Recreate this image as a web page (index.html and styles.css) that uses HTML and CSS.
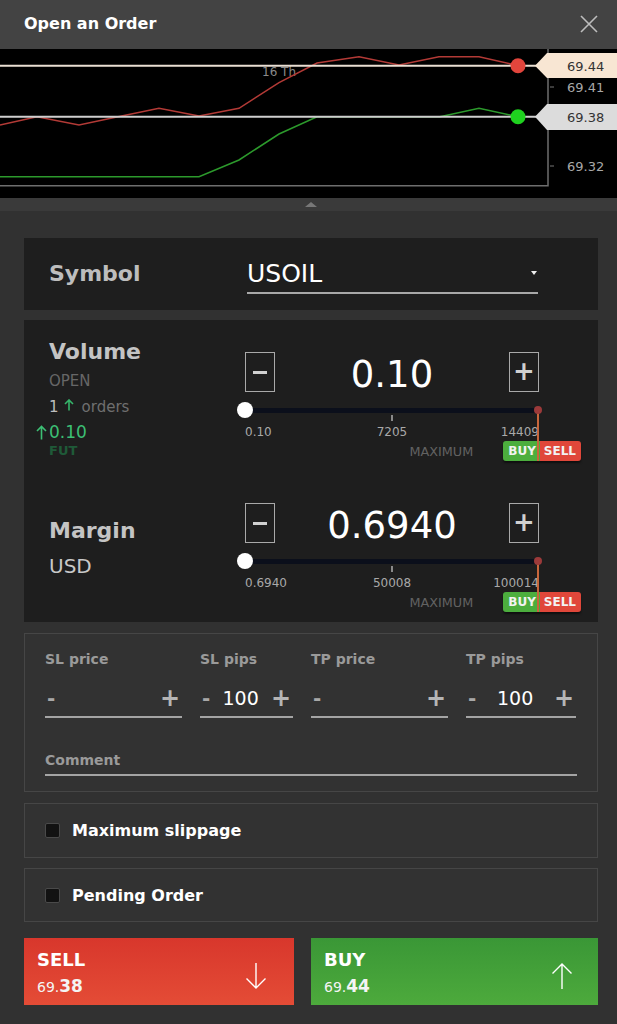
FILE: index.html
```html
<!DOCTYPE html>
<html lang="en">
<head>
<meta charset="utf-8">
<title>Open an Order</title>
<link rel="stylesheet" href="styles.css">
</head>
<body>
<div class="app">
  <header class="titlebar">
    <h1 class="title">Open an Order</h1>
    <svg class="close" width="18" height="18" viewBox="0 0 18 18"><path d="M1 1L17 17M17 1L1 17" stroke="#bdbdbd" stroke-width="1.6" fill="none"/></svg>
  </header>

  <div class="chart">
    <svg width="617" height="149" viewBox="0 0 617 149">
      <text x="262" y="27" class="ch-date">16 Th</text>
      <polyline fill="none" stroke="#b33a36" stroke-width="1.5" points="0,76 37,67.7 79,76 118,67.7 159,59.3 199,67 239,59.3 279,33.7 317,14 359,7.7 399,16 439,7.7 479,7.7 518,16.7"/>
      <polyline fill="none" stroke="#2c9a2c" stroke-width="1.5" points="0,127.7 199,127.7 239,111 279,85 317,67.7 440,67.7 479,59.3 518,67.7"/>
      <line x1="0" y1="16.7" x2="537" y2="16.7" stroke="#eadfd3" stroke-width="2"/>
      <line x1="0" y1="67.7" x2="537" y2="67.7" stroke="#cfcfcf" stroke-width="2"/>
      <polyline fill="none" stroke="#6e6e6e" stroke-width="1.5" points="0,136.7 548,136.7 548,0"/>
      <line x1="550" y1="38" x2="554" y2="38" stroke="#777" stroke-width="1"/>
      <line x1="550" y1="117" x2="554" y2="117" stroke="#777" stroke-width="1"/>
      <text x="567" y="42.5" class="ch-price">69.41</text>
      <text x="567" y="121.5" class="ch-price">69.32</text>
      <circle cx="518" cy="16.7" r="7.5" fill="#e2453c"/>
      <circle cx="518" cy="67.7" r="7.5" fill="#1fd21f"/>
      <polygon points="535,16.7 547,4 617,4 617,29 547,29" fill="#f8e6d3"/>
      <text x="567" y="21.5" class="ch-tag">69.44</text>
      <polygon points="535,67.7 547,55 617,55 617,81 547,81" fill="#dcdcdc"/>
      <text x="567" y="72.5" class="ch-tag">69.38</text>
    </svg>
  </div>
  <div class="chart-handle"><span class="handle-tri"></span></div>

  <main class="form">
    <section class="panel symbol-panel">
      <div class="sym-label">Symbol</div>
      <div class="select">
        <span class="select-value">USOIL</span>
        <span class="caret"></span>
      </div>
    </section>

    <section class="panel amount-panel">
      <div class="amount-row">
        <div class="amount-info">
          <div class="amount-title">Volume</div>
          <div class="info-open">OPEN</div>
          <div class="info-orders"><span class="num">1</span>
            <svg class="up-mini" width="10" height="12" viewBox="0 0 10 12"><path d="M5 11.5V1M1 5L5 1L9 5" stroke="#35b56a" stroke-width="1.6" fill="none"/></svg>
            <span class="muted">orders</span></div>
          <div class="info-net"><svg class="up-net" width="11" height="15" viewBox="0 0 11 15"><path d="M5.5 14.5V1.5M1 6L5.5 1.5L10 6" stroke="#3cbf74" stroke-width="1.6" fill="none"/></svg>0.10</div>
          <div class="info-fut">FUT</div>
        </div>
        <div class="amount-ctrl">
          <div class="stepper">
            <span class="step-btn"><span class="minus-bar"></span></span>
            <span class="step-value">0.10</span>
            <span class="step-btn plus">+</span>
          </div>
          <div class="slider">
            <span class="track"></span>
            <span class="tick"></span>
            <span class="knob"></span>
            <span class="end-dot"></span>
            <span class="end-line"></span>
          </div>
          <div class="scale"><span>0.10</span><span>7205</span><span class="r">14409</span></div>
          <div class="max-row">
            <span class="max-label">MAXIMUM</span>
            <span class="badge"><span class="b-buy">BUY</span><span class="b-sell">SELL</span></span>
          </div>
        </div>
      </div>

      <div class="amount-row">
        <div class="amount-info margin-info">
          <div class="amount-title">Margin</div>
          <div class="info-usd">USD</div>
        </div>
        <div class="amount-ctrl">
          <div class="stepper">
            <span class="step-btn"><span class="minus-bar"></span></span>
            <span class="step-value">0.6940</span>
            <span class="step-btn plus">+</span>
          </div>
          <div class="slider">
            <span class="track"></span>
            <span class="tick"></span>
            <span class="knob"></span>
            <span class="end-dot"></span>
            <span class="end-line"></span>
          </div>
          <div class="scale"><span>0.6940</span><span>50008</span><span class="r">100014</span></div>
          <div class="max-row">
            <span class="max-label">MAXIMUM</span>
            <span class="badge"><span class="b-buy">BUY</span><span class="b-sell">SELL</span></span>
          </div>
        </div>
      </div>
    </section>

    <section class="panel outline sltp-panel">
      <div class="sltp-grid">
        <div class="field">
          <div class="f-label">SL price</div>
          <div class="f-input"><span class="pm">-</span><span class="pp">+</span></div>
        </div>
        <div class="field">
          <div class="f-label">SL pips</div>
          <div class="f-input"><span class="pm">-</span><span class="fv">100</span><span class="pp">+</span></div>
        </div>
        <div class="field">
          <div class="f-label">TP price</div>
          <div class="f-input"><span class="pm">-</span><span class="pp">+</span></div>
        </div>
        <div class="field">
          <div class="f-label">TP pips</div>
          <div class="f-input"><span class="pm">-</span><span class="fv">100</span><span class="pp">+</span></div>
        </div>
      </div>
      <div class="comment">Comment</div>
    </section>

    <section class="panel outline check-panel">
      <span class="checkbox"></span><span class="check-label">Maximum slippage</span>
    </section>

    <section class="panel outline check-panel pending">
      <span class="checkbox"></span><span class="check-label">Pending Order</span>
    </section>

    <div class="actions">
      <button class="trade sell">
        <span class="trade-text"><span class="trade-name">SELL</span><span class="trade-price">69.<b>38</b></span></span>
        <svg width="22" height="28" viewBox="0 0 22 28"><path d="M11 1V26M1.5 16.5L11 26L20.5 16.5" stroke="#fff" stroke-width="1.4" fill="none"/></svg>
      </button>
      <button class="trade buy">
        <span class="trade-text"><span class="trade-name">BUY</span><span class="trade-price">69.<b>44</b></span></span>
        <svg width="22" height="28" viewBox="0 0 22 28"><path d="M11 27V2M1.5 11.5L11 2L20.5 11.5" stroke="#fff" stroke-width="1.4" fill="none"/></svg>
      </button>
    </div>
  </main>
</div>
</body>
</html>
```

FILE: styles.css
```css
* { box-sizing: border-box; margin: 0; padding: 0; }
html, body { background: #313131; }
body {
  width: 617px;
  height: 1024px;
  overflow: hidden;
  font-family: "DejaVu Sans", Verdana, sans-serif;
  color: #fff;
}
.app { width: 617px; }

.titlebar {
  height: 49px;
  background: #434343;
  display: flex;
  align-items: center;
  justify-content: space-between;
  padding: 0 19px 0 24px;
}
.title { font-size: 16px; font-weight: bold; color: #fff; margin-top: -2px; line-height: 20px; }
.close { display: block; margin-top: -2px; }

.chart { height: 149px; background: #000; }
.chart svg { display: block; }
.ch-date { font-family: "DejaVu Sans", sans-serif; font-size: 12px; fill: #8a8a8a; }
.ch-price { font-family: "DejaVu Sans", sans-serif; font-size: 13px; fill: #a8a8a8; }
.ch-tag { font-family: "DejaVu Sans", sans-serif; font-size: 13px; fill: #333; }

.chart-handle {
  height: 13px;
  background: #3a3a3a;
  display: flex;
  justify-content: center;
  align-items: center;
  padding-left: 5px;
}
.handle-tri {
  width: 0; height: 0;
  border-left: 6px solid transparent;
  border-right: 6px solid transparent;
  border-bottom: 5px solid #777;
}

.form {
  padding: 27px 19px 0 24px;
  display: flex;
  flex-direction: column;
}
.panel { background: #1e1e1e; }
.panel.outline { background: #323232; border: 1px solid #464646; }

/* symbol */
.symbol-panel {
  height: 72px;
  display: flex;
  align-items: flex-start;
  padding: 21px 0 0 25px;
}
.sym-label {
  width: 198px;
  font-size: 22px;
  font-weight: bold;
  color: #bdbdbd;
  line-height: 30px;
}
.select {
  width: 291px;
  display: flex;
  justify-content: space-between;
  align-items: center;
  border-bottom: 2px solid #a8a8a8;
  padding-bottom: 3px;
}
.select-value { font-size: 25px; line-height: 30px; color: #fff; }
.caret {
  width: 0; height: 0;
  border-left: 3px solid transparent;
  border-right: 3px solid transparent;
  border-top: 4px solid #eee;
  margin-right: 1px;
  margin-top: -2px;
}

/* volume / margin */
.amount-panel { margin-top: 10px; height: 302px; }
.amount-row { height: 151px; display: flex; }
.amount-info { width: 221px; padding: 19px 0 0 25px; }
.amount-title { font-size: 22px; font-weight: bold; color: #c4c4c4; line-height: 26px; }
.info-open { margin-top: 6px; font-size: 15px; line-height: 20px; color: #676767; }
.info-orders { margin-top: 6px; font-size: 15px; line-height: 20px; color: #6f6f6f; display: flex; align-items: center; }
.info-orders .num { color: #bdbdbd; }
.up-mini { margin: -4px 8px 0 5px; display: block; }
.info-net { margin: 4px 0 0 -13px; font-size: 17px; line-height: 22px; color: #3cbf74; display: flex; align-items: center; }
.up-net { display: block; margin-right: 2px; }
.info-fut { font-size: 13px; font-weight: bold; line-height: 16px; color: #1f5a38; }
.margin-info { padding-top: 47px; }
.info-usd { margin-top: 10px; font-size: 20px; line-height: 24px; color: #c8c8c8; }

.amount-ctrl { width: 336px; padding-top: 32px; }
.stepper { width: 294px; height: 40px; display: flex; justify-content: space-between; align-items: center; }
.step-btn {
  width: 30px; height: 40px;
  border: 1.5px solid #a9a9a9;
  display: flex; align-items: center; justify-content: center;
  color: #d0d0d0;
}
.minus-bar { width: 14px; height: 3px; background: #d0d0d0; }
.step-btn.plus { font-size: 26px; font-weight: bold; line-height: 1; padding-bottom: 2px; }
.step-value { font-size: 37px; line-height: 40px; color: #fff; padding-top: 5px; }

.slider { position: relative; width: 293px; height: 16px; margin-top: 10px; }
.track { position: absolute; left: 0; right: 0; top: 5.5px; height: 5px; background: #0b0f1b; }
.tick { position: absolute; left: 146px; top: 13px; width: 1.5px; height: 6px; background: #8a8a8a; }
.knob { position: absolute; left: -8px; top: 0; width: 16px; height: 16px; border-radius: 50%; background: #fff; }
.end-dot { position: absolute; right: -4px; top: 4px; width: 8px; height: 8px; border-radius: 50%; background: #9c3a3a; z-index: 2; }
.end-line { position: absolute; left: 292px; top: 9px; width: 1.5px; height: 50px; background: #c8663c; z-index: 1; }

.scale {
  width: 294px;
  margin-top: 7px;
  display: grid;
  grid-template-columns: 1fr auto 1fr;
  font-size: 12px;
  line-height: 14px;
  color: #a9a9a9;
}
.scale .r { text-align: right; }
.max-row { margin-top: 2px; height: 20px; display: flex; justify-content: flex-end; align-items: center; }
.max-label { font-size: 12.8px; color: #626262; margin-right: 30px; }
.badge { display: flex; height: 20px; border-radius: 3px; overflow: hidden; font-size: 12px; font-weight: bold; line-height: 20px; box-shadow: 0 2px 2px rgba(0,0,0,0.5); }
.b-buy { background: #4cae3e; padding: 0 4px 0 5px; color: #f2f2f2; }
.b-sell { background: #e0473a; padding: 0 5px 0 4px; color: #f2f2f2; }

/* SL / TP */
.sltp-panel { margin-top: 11px; height: 159px; padding: 16px 20px 0 20px; }
.sltp-grid { display: grid; grid-template-columns: 137px 93px 137px 110px; column-gap: 18px; }
.f-label { font-size: 14px; font-weight: bold; line-height: 18px; color: #9a9a9a; }
.f-input {
  margin-top: 16px;
  height: 34px;
  display: flex;
  justify-content: space-between;
  align-items: center;
  border-bottom: 2px solid #a4a4a4;
  padding: 0 2px 4px 2px;
}
.pm { font-size: 20px; font-weight: bold; color: #a8a8a8; line-height: 28px; }
.pp { font-size: 24px; font-weight: bold; color: #b5b5b5; line-height: 28px; }
.fv { font-size: 19px; color: #fff; line-height: 28px; }
.comment {
  margin-top: 33px;
  font-size: 14px; font-weight: bold; line-height: 18px; color: #9a9a9a;
  border-bottom: 2px solid #a4a4a4;
  padding-bottom: 5px;
}

/* checks */
.check-panel { margin-top: 11px; height: 55px; display: flex; align-items: center; padding-left: 20px; }
.check-panel.pending { margin-top: 10px; height: 54px; }
.checkbox { width: 15px; height: 15px; background: #121212; border: 1px solid #4a4a4a; border-radius: 2px; margin-right: 12px; }
.check-label { font-size: 16px; font-weight: bold; color: #fff; }

/* actions */
.actions { margin-top: 16px; display: grid; grid-template-columns: 270px 287px; column-gap: 17px; }
.trade {
  height: 67px;
  border: none;
  display: flex;
  align-items: center;
  justify-content: space-between;
  padding: 2px 0 0 13px;
  font-family: inherit;
  color: #fff;
  text-align: left;
}
.trade svg { display: block; margin-top: 6px; }
.sell { background: linear-gradient(#d8372c, #e44c36); padding-right: 27px; }
.buy { background: linear-gradient(#3a9736, #4daa3c); padding-right: 25px; }
.trade-text { display: flex; flex-direction: column; }
.trade-name { font-size: 18px; font-weight: bold; line-height: 22px; }
.trade-price { font-size: 14px; line-height: 20px; margin-top: 5px; color: #f4f4f4; }
.trade-price b { font-size: 17px; }
```
